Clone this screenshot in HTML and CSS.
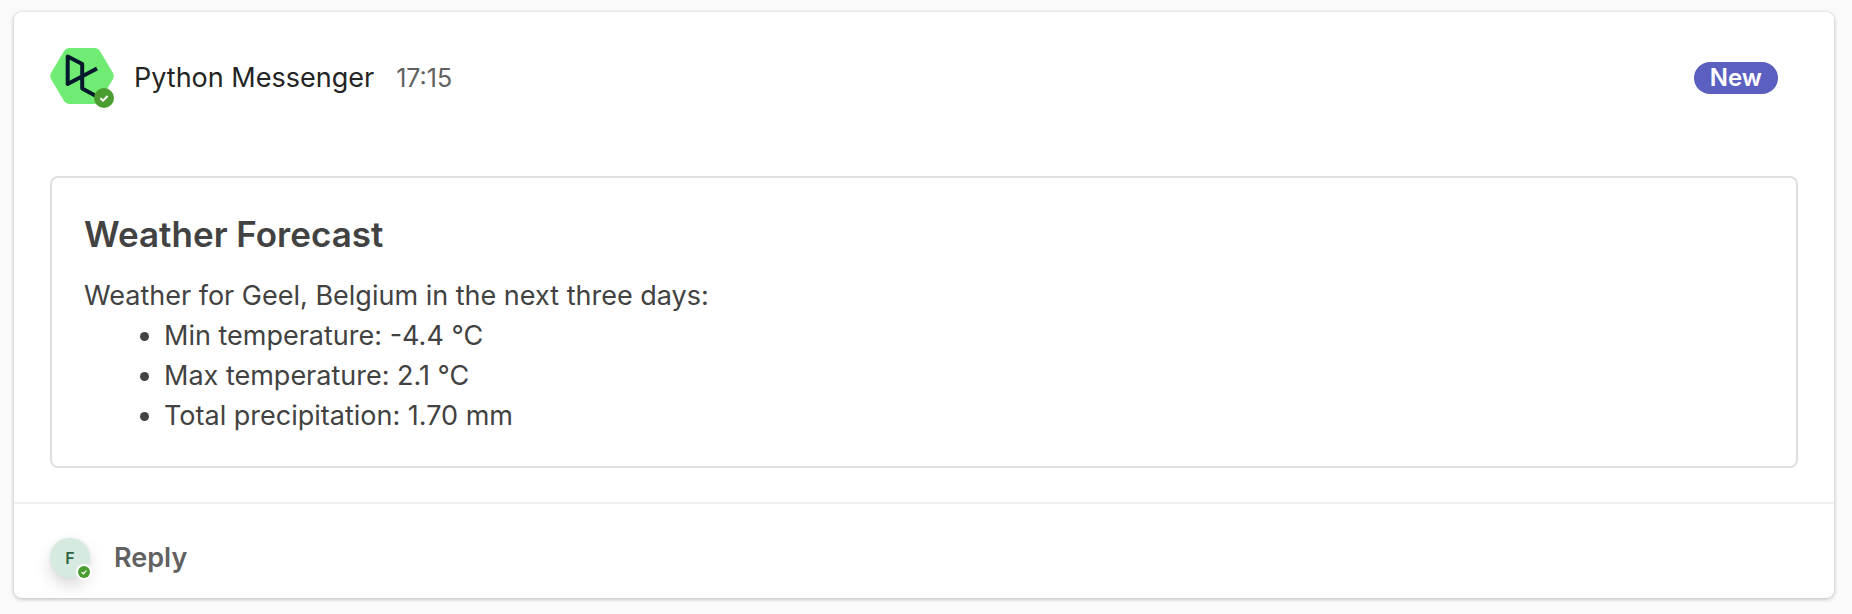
FILE: index.html
```html
<!DOCTYPE html>
<html lang="en">
<head>
<meta charset="utf-8">
<title>Python Messenger</title>
<link rel="stylesheet" href="styles.css">
</head>
<body>
<article class="message">
  <header class="message-header">
    <div class="avatar">
      <svg class="avatar-logo" viewBox="0 0 64 56" aria-hidden="true">
        <path fill="#70ec74" d="M19 0H45Q48 0 50 3L63 25Q64.500 28 63 31L50 53Q48 56 45 56H19Q16 56 14 53L1 31Q-.5 28 1 25L14 3Q16 0 19 0Z"/>
        <path fill="none" stroke="#05192d" stroke-width="4" stroke-linejoin="round" d="M47 20.500L17.700 36V8.500L32.200 16V40.500L46 48"/>
      </svg>
      <svg class="presence" viewBox="0 0 20 20" role="img" aria-label="Available">
        <circle cx="10" cy="10" r="10" fill="#4a9e2f"/>
        <path d="M6.400 10.200L9 12.600L13.600 8" fill="none" stroke="#fff" stroke-width="1.900"/>
      </svg>
    </div>
    <span class="sender">Python Messenger</span>
    <time class="time">17:15</time>
    <span class="tag">New</span>
  </header>
  <section class="card">
    <h2 class="card-title">Weather Forecast</h2>
    <p class="card-text">Weather for Geel, Belgium in the next three days:</p>
    <ul class="card-list">
      <li>Min temperature: -4.4 °C</li>
      <li>Max temperature: 2.1 °C</li>
      <li>Total precipitation: 1.70 mm</li>
    </ul>
  </section>
  <footer class="message-footer">
    <div class="user">F
      <svg class="user-presence" viewBox="0 0 16 16" role="img" aria-label="Available">
        <circle cx="8" cy="8" r="8" fill="#fff"/>
        <circle cx="8" cy="8" r="6" fill="#4a9e2f"/>
        <path d="M5.600 8.200L7.300 9.800L10.400 6.600" fill="none" stroke="#fff" stroke-width="1.300"/>
      </svg>
    </div>
    <button class="reply" type="button">Reply</button>
  </footer>
</article>
</body>
</html>
```
FILE: styles.css
```css
* {
  box-sizing: border-box;
}

body {
  margin: 0;
  padding: 12px 18px 16px 14px;
  background: #fafafa;
  color: #424242;
  font: 27px/40px Inter, sans-serif;
}

.message {
  background: #fff;
  border-radius: 8px;
  box-shadow: 0 1px 4px rgba(0, 0, 0, 0.28);
}

.message-header {
  display: flex;
  align-items: center;
  padding: 36px 56px 68px 36px;
}

.avatar {
  position: relative;
  width: 64px;
  height: 60px;
  margin-right: 20px;
}

.avatar-logo {
  display: block;
  width: 64px;
  height: 56px;
}

.presence {
  position: absolute;
  right: 0;
  bottom: 0;
  width: 20px;
  height: 20px;
}

.sender {
  color: #242424;
}

.time {
  margin-left: 22px;
  color: #616161;
  font-size: 25px;
}

.tag {
  margin-left: auto;
  padding: 0 16px;
  border-radius: 16px;
  background: #5b5fc0;
  color: #fff;
  font-size: 24px;
  font-weight: 600;
  line-height: 32px;
}

.card {
  margin: 0 36px 34px;
  padding: 32px 32px 30px;
  border: 2px solid #e0e0e0;
  border-radius: 8px;
}

.card-title {
  margin: 0 0 18px;
  font-size: 35px;
  font-weight: 600;
  line-height: 48px;
}

.card-text,
.card-list {
  margin: 0;
}

.card-list {
  padding-left: 80px;
}

.message-footer {
  display: flex;
  align-items: center;
  gap: 24px;
  padding: 34px 36px 20px;
  border-top: 2px solid #f0f0f0;
}

.user {
  position: relative;
  width: 40px;
  height: 40px;
  border-radius: 50%;
  background: #d7eadf;
  box-shadow: 0 8px 16px rgba(0, 0, 0, 0.14), 0 0 4px rgba(0, 0, 0, 0.06);
  color: #2f6443;
  font-size: 16px;
  font-weight: 600;
  text-align: center;
}

.user-presence {
  position: absolute;
  right: -2px;
  bottom: -2px;
  width: 16px;
  height: 16px;
}

.reply {
  padding: 0;
  border: 0;
  background: none;
  color: #616161;
  font: inherit;
  font-weight: 600;
}
```
